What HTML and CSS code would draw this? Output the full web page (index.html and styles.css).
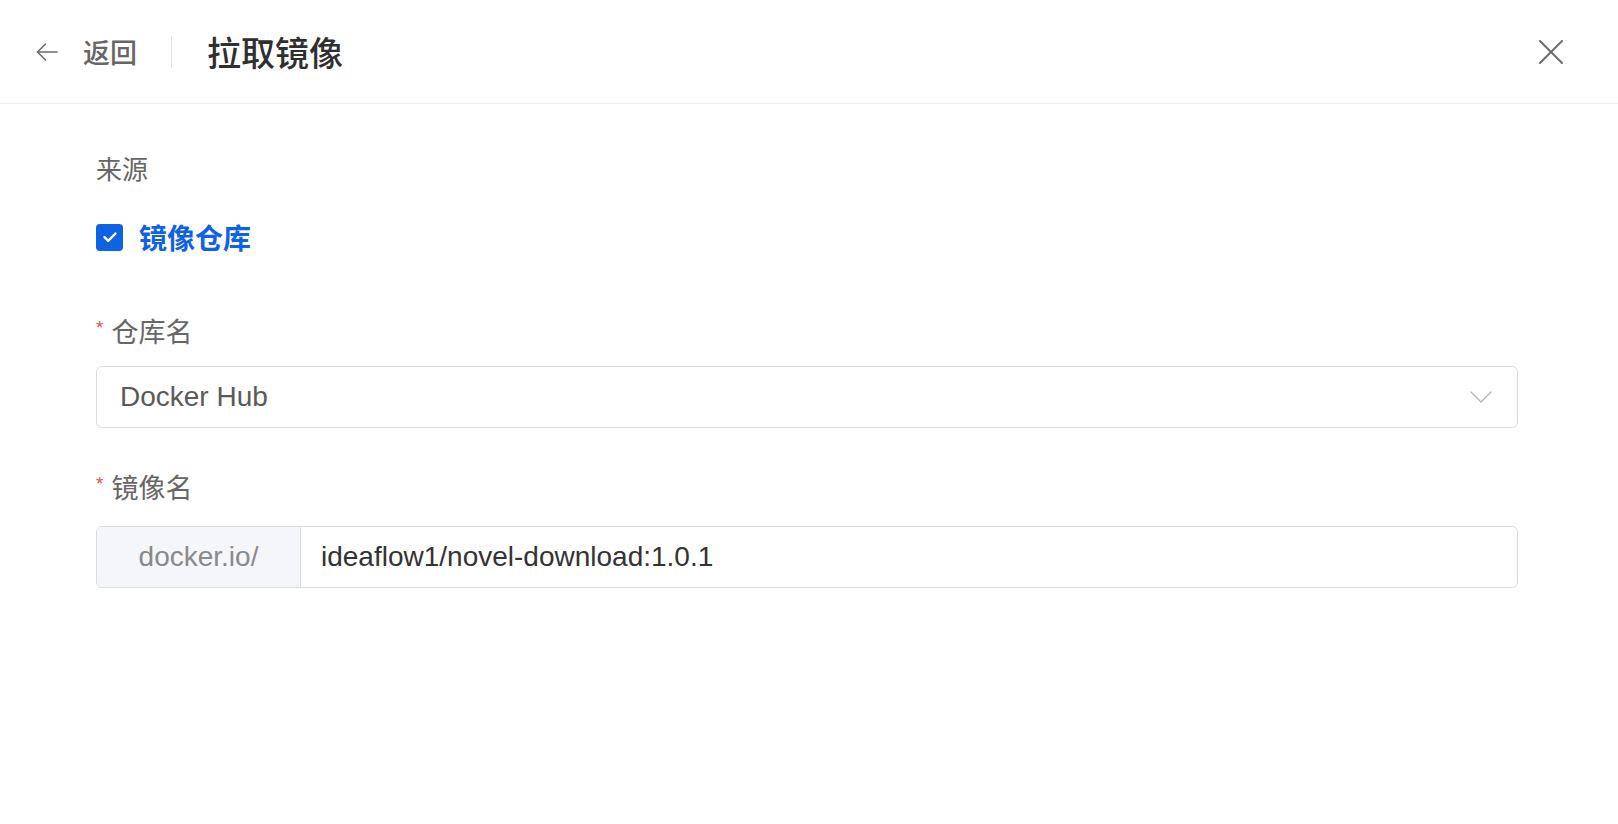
FILE: index.html
```html
<!DOCTYPE html>
<html lang="zh-CN">
<head>
<meta charset="utf-8">
<title>拉取镜像</title>
<link rel="stylesheet" href="styles.css">
</head>
<body>
<header class="header">
  <div class="back">
    <svg class="back-icon" width="22" height="22" viewBox="0 0 22 22" fill="none" stroke="#6b6b6b" stroke-width="1.6" stroke-linecap="round" stroke-linejoin="round">
      <path d="M21 11H1.5"/>
      <path d="M9.5 3L1.5 11L9.5 19"/>
    </svg>
    <span class="back-text">返回</span>
  </div>
  <span class="vdivider"></span>
  <h1 class="title">拉取镜像</h1>
  <span class="spacer"></span>
  <svg class="close" width="24" height="24" viewBox="0 0 24 24" fill="none" stroke="#6b6b6b" stroke-width="2" stroke-linecap="round">
    <path d="M1 1L23 23"/>
    <path d="M23 1L1 23"/>
  </svg>
</header>
<main class="content">
  <div class="label">来源</div>
  <div class="check-row">
    <span class="checkbox">
      <svg width="18" height="18" viewBox="0 0 18 18" fill="none" stroke="#fff" stroke-width="2.4" stroke-linecap="round" stroke-linejoin="round"><path d="M3.5 9.2L7.2 12.8L14.5 5.5"/></svg>
    </span>
    <span class="check-text">镜像仓库</span>
  </div>
  <div class="label label-req first-req"><span class="star">*</span>仓库名</div>
  <div class="select">
    <span class="select-text">Docker Hub</span>
    <svg width="22" height="12" viewBox="0 0 22 12" fill="none" stroke="#b5b5b5" stroke-width="1.4" stroke-linecap="round" stroke-linejoin="round"><path d="M1 1L11 11L21 1"/></svg>
  </div>
  <div class="label label-req second-req"><span class="star">*</span>镜像名</div>
  <div class="input-group">
    <span class="addon">docker.io/</span>
    <span class="input-text">ideaflow1/novel-download:1.0.1</span>
  </div>
</main>
</body>
</html>
```

FILE: styles.css
```css
* { box-sizing: border-box; }
html, body { margin: 0; padding: 0; background: #fff; }
body {
  font-family: "Liberation Sans", "Noto Sans CJK SC", sans-serif;
  width: 1618px;
  height: 824px;
  overflow: hidden;
}
.header {
  height: 104px;
  border-bottom: 1px solid #ececec;
  display: flex;
  align-items: center;
  padding: 0 55px 0 36px;
}
.back { display: flex; align-items: center; }
.back-icon { display: block; }
.back-text {
  margin-left: 25px;
  font-size: 27px;
  color: #666;
  font-family: "Noto Sans CJK SC", sans-serif;
  font-weight: 500;
  line-height: 40px;
}
.vdivider {
  width: 1px;
  height: 32px;
  background: #e3e3e3;
  margin-left: 34px;
}
.title {
  margin: 0 0 0 35px;
  font-size: 34px;
  font-weight: 500;
  color: #2f2f2f;
  font-family: "Noto Sans CJK SC", sans-serif;
  line-height: 44px;
}
.spacer { flex: 1; }
.close { display: block; }
.content {
  padding: 46px 0 0 96px;
  width: 1518px;
  display: flex;
  flex-direction: column;
}
.label {
  font-family: "Noto Sans CJK SC", sans-serif;
  font-size: 26px;
  line-height: 36px;
  color: #666;
}
.label-req { font-size: 27px; display: flex; align-items: center; }
.star {
  color: #e5534b;
  font-family: "Liberation Sans", sans-serif;
  font-size: 19px;
  margin-right: 8px;
  position: relative;
  top: -3px;
}
.check-row {
  margin-top: 37px;
  display: flex;
  align-items: center;
  height: 28px;
}
.checkbox {
  width: 27px;
  height: 27px;
  border-radius: 4px;
  background: #0f62e4;
  display: flex;
  align-items: center;
  justify-content: center;
}
.checkbox svg { display: block; }
.check-text {
  margin-left: 16px;
  font-family: "Noto Sans CJK SC", sans-serif;
  font-size: 28px;
  font-weight: 700;
  color: #0f62e4;
  line-height: 36px;
}
.first-req { margin-top: 62px; }
.second-req { margin-top: 41px; }
.select {
  margin-top: 17px;
  height: 62px;
  border: 1px solid #dcdcdc;
  border-radius: 6px;
  display: flex;
  align-items: center;
  justify-content: space-between;
  padding: 0 25px 0 23px;
}
.select-text { font-size: 28px; color: #5a5a5a; }
.select svg { display: block; }
.input-group {
  margin-top: 21px;
  height: 62px;
  border: 1px solid #dcdcdc;
  border-radius: 6px;
  display: flex;
  overflow: hidden;
}
.addon {
  width: 204px;
  background: #f5f6f9;
  border-right: 1px solid #dcdcdc;
  display: flex;
  align-items: center;
  justify-content: center;
  font-size: 28px;
  color: #8a8a8a;
}
.input-text {
  display: flex;
  align-items: center;
  padding-left: 20px;
  font-size: 28px;
  color: #333;
}
```
